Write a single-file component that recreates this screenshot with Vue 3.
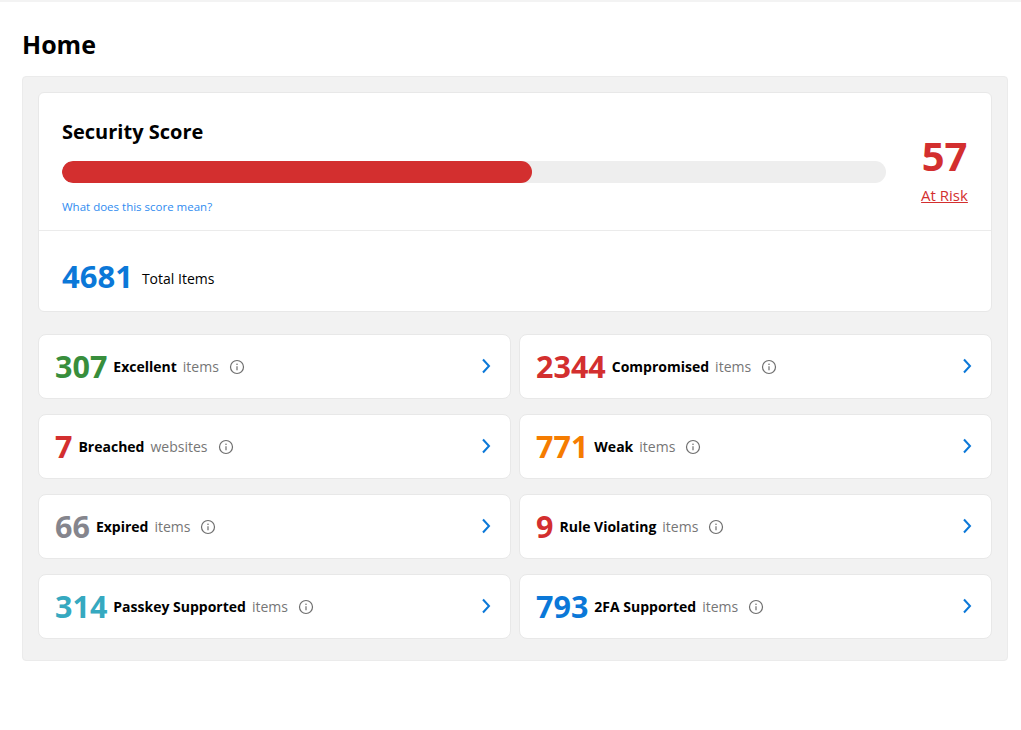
<template>
  <div class="page">
    <h1 class="title">Home</h1>
    <div class="panel">
      <section class="score-card">
        <div class="score-top">
          <div class="score-left">
            <h2 class="score-title">Security Score</h2>
            <div class="bar">
              <div class="bar-fill" :style="{ width: score + '%' }"></div>
            </div>
            <a class="score-link">What does this score mean?</a>
          </div>
          <div class="score-right">
            <div class="score-num">{{ score }}</div>
            <a class="score-state">At Risk</a>
          </div>
        </div>
        <div class="score-bottom">
          <span class="total-num">4681</span>
          <span class="total-label">Total Items</span>
        </div>
      </section>

      <div class="grid">
        <div v-for="row in rows" :key="row.label" class="row">
          <span class="num" :style="{ color: row.color }">{{ row.count }}</span>
          <span class="label">{{ row.label }}</span>
          <span class="unit">{{ row.unit }}</span>
          <svg class="info" width="16" height="16" viewBox="0 0 16 16" fill="none">
            <circle cx="8" cy="8" r="6.5" stroke="#6e6e6e" stroke-width="1.2" />
            <circle cx="8" cy="5.2" r="0.8" fill="#6e6e6e" />
            <path d="M8 7.2v4" stroke="#6e6e6e" stroke-width="1.2" />
          </svg>
          <svg class="chevron" width="10" height="16" viewBox="0 0 10 16" fill="none">
            <path d="M2 1.5l6 6.5-6 6.5" stroke="#0b78d8" stroke-width="2" />
          </svg>
        </div>
      </div>
    </div>
  </div>
</template>

<script setup>
const score = 57

const rows = [
  { count: 307, label: 'Excellent', unit: 'items', color: '#388e3c' },
  { count: 2344, label: 'Compromised', unit: 'items', color: '#d32f2f' },
  { count: 7, label: 'Breached', unit: 'websites', color: '#d32f2f' },
  { count: 771, label: 'Weak', unit: 'items', color: '#f57c00' },
  { count: 66, label: 'Expired', unit: 'items', color: '#85858d' },
  { count: 9, label: 'Rule Violating', unit: 'items', color: '#d32f2f' },
  { count: 314, label: 'Passkey Supported', unit: 'items', color: '#36a9c0' },
  { count: 793, label: '2FA Supported', unit: 'items', color: '#0b78d8' }
]
</script>

<style>
html, body {
  background: #fff;
}
</style>

<style scoped>
.page {
  height: 730px;
  box-sizing: border-box;
  padding: 26px 13px 0 22px;
  background: #fff;
  border-top: 2px solid #f3f3f3;
  font-family: "Open Sans", "Noto Sans", sans-serif;
  color: #000;
}

.title {
  margin: 0 0 16px;
  font-size: 25px;
  line-height: 32px;
  font-weight: 700;
}

.panel {
  background: #f2f2f2;
  border: 1px solid #ebebeb;
  border-radius: 4px;
  padding: 15px;
}

.score-card {
  background: #fff;
  border: 1px solid #e8e8e8;
  border-radius: 6px;
}

.score-top {
  display: flex;
  align-items: flex-start;
  height: 138px;
  box-sizing: border-box;
  padding: 25px 23px 0;
  border-bottom: 1px solid #ebebeb;
}

.score-left {
  flex: 1;
}

.score-title {
  margin: 0 0 15px;
  font-size: 20px;
  line-height: 28px;
  font-weight: 700;
}

.bar {
  height: 22px;
  border-radius: 11px;
  background: #eeeeee;
  overflow: hidden;
}

.bar-fill {
  height: 100%;
  border-radius: 11px;
  background: #d32f2f;
}

.score-link {
  display: block;
  margin-top: 16px;
  font-size: 11.5px;
  line-height: 16px;
  color: #2f8cf0;
}

.score-right {
  width: 47px;
  margin: 15px 0 0 35px;
  text-align: center;
  color: #d32f2f;
}

.score-num {
  font-size: 40px;
  line-height: 46px;
  font-weight: 700;
}

.score-state {
  display: block;
  margin-top: 6px;
  font-size: 15px;
  line-height: 20px;
  text-decoration: underline;
  white-space: nowrap;
}

.score-bottom {
  display: flex;
  align-items: center;
  gap: 9px;
  height: 80px;
  box-sizing: border-box;
  padding-left: 23px;
  padding-top: 14px;
}

.total-num {
  margin-bottom: 4px;
  font-size: 31px;
  font-weight: 700;
  color: #0b78d8;
}

.total-label {
  font-size: 14px;
}

.grid {
  display: grid;
  grid-template-columns: 1fr 1fr;
  column-gap: 8px;
  row-gap: 15px;
  margin-top: 22px;
  margin-bottom: 6px;
}

.row {
  display: flex;
  align-items: center;
  height: 65px;
  box-sizing: border-box;
  padding: 0 19px 0 16px;
  background: #fff;
  border: 1px solid #e8e8e8;
  border-radius: 8px;
}

.num {
  font-size: 30.5px;
  line-height: 40px;
  font-weight: 700;
  margin-right: 6px;
  margin-bottom: 2px;
}

.label {
  font-size: 14px;
  font-weight: 700;
  margin-right: 6px;
}

.unit {
  font-size: 14px;
  color: #767676;
  margin-right: 10px;
}

.chevron {
  margin-left: auto;
  margin-top: -2px;
}
</style>
